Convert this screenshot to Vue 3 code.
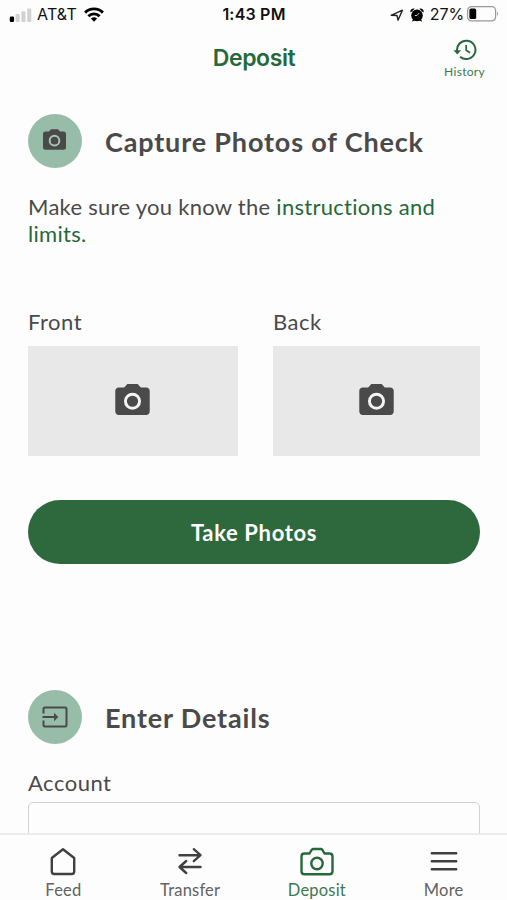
<!-- src/App.vue -->
<script setup>
import { ref } from 'vue'

const tabs = [
  { key: 'feed', label: 'Feed' },
  { key: 'transfer', label: 'Transfer' },
  { key: 'deposit', label: 'Deposit' },
  { key: 'more', label: 'More' }
]
const sides = [
  { key: 'front', label: 'Front' },
  { key: 'back', label: 'Back' }
]

const active = ref('deposit')
</script>

<template>
  <div class="screen">
    <div class="status">
      <div class="status__left">
        <svg class="signal" viewBox="0 0 24 16">
          <rect x="0" y="10" width="4.6" height="6" rx="1.4" fill="#000" />
          <rect x="6.2" y="7.5" width="4.4" height="8.5" rx="1.2" fill="#d2d2d2" />
          <rect x="12.4" y="4.5" width="4.4" height="11.5" rx="1.2" fill="#d2d2d2" />
          <rect x="18.6" y="1.5" width="4.4" height="14.5" rx="1.2" fill="#d2d2d2" />
        </svg>
        <span class="carrier">AT&amp;T</span>
        <svg class="wifi" viewBox="0 0 20 15" fill="none" stroke="#000" stroke-width="2.9">
          <path d="M1.1 5.6a12.6 12.6 0 0 1 17.8 0" />
          <path d="M4.4 9.2a8 8 0 0 1 11.2 0" />
          <path d="M10 14.8l-3.1-3.2a4.5 4.5 0 0 1 6.2 0z" fill="#000" stroke="none" />
        </svg>
      </div>
      <div class="clock">1:43 PM</div>
      <div class="status__right">
        <svg class="locate" viewBox="0 0 14 14" fill="none" stroke="#222" stroke-width="1.4" stroke-linejoin="round">
          <path d="M1.2 7.3L12.4 2.2 8 12.2 7 7.5z" />
        </svg>
        <svg class="alarm" viewBox="0 0 14 14">
          <circle cx="7" cy="7.4" r="5.8" />
          <path d="M.6 4.6A3 3 0 0 1 4.8.8zM13.4 4.6A3 3 0 0 0 9.2.8zM1.8 13.8l1.4-3 2 1.4zM12.2 13.8l-1.4-3-2 1.4z" />
          <path d="M9.2 5L7 7.500H4.800" fill="none" stroke="#ddd" stroke-width=".9" />
        </svg>
        <span class="percent">27%</span>
        <svg class="battery" viewBox="0 0 32 16">
          <rect x=".6" y=".6" width="28" height="14.300" rx="4" fill="none" stroke="#999" stroke-width="1.200" />
          <rect x="2.400" y="2.600" width="6.800" height="10.400" rx="1.600" />
          <path d="M30.200 5.300q2 2.400 0 4.800z" fill="#999" />
        </svg>
      </div>
    </div>

    <header class="header">
      <h1 class="header__title">Deposit</h1>
      <a class="history">
        <svg viewBox="0 0 24 22" fill="none" stroke="#25693a" stroke-width="2">
          <path d="M4.200 12.500A9.200 9.200 0 1 1 7.100 17.700" />
          <path d="M.5 11.300h7.600l-3.800 4.200z" fill="#25693a" stroke="none" />
          <path d="M13.200 6v5.200l3.900 2.500" stroke-width="1.700" />
        </svg>
        <span>History</span>
      </a>
    </header>

    <main class="content">
      <div class="section">
        <div class="badge">
          <svg class="badge__camera" viewBox="2 2 20 18">
            <path d="M9 2L7.170 4H4c-1.100 0-2 .9-2 2v12c0 1.100.9 2 2 2h16c1.100 0 2-.9 2-2V6c0-1.100-.9-2-2-2h-3.170L15 2z" fill="#4a4a4a" />
            <circle cx="12" cy="12" r="4.200" fill="#4a4a4a" stroke="#a5c9b7" stroke-width="1.700" />
          </svg>
        </div>
        <h2>Capture Photos of Check</h2>
      </div>

      <p class="intro">Make sure you know the <a>instructions and<br>limits.</a></p>

      <div class="photos">
        <div v-for="s in sides" :key="s.key" class="photo">
          <div class="label">{{ s.label }}</div>
          <div class="photo__box">
            <svg viewBox="2 2 20 18">
              <path d="M9 2L7.170 4H4c-1.100 0-2 .9-2 2v12c0 1.100.9 2 2 2h16c1.100 0 2-.9 2-2V6c0-1.100-.9-2-2-2h-3.170L15 2z" fill="#4a4a4a" />
              <circle cx="12" cy="12" r="4.100" fill="#4a4a4a" stroke="#f4f4f4" stroke-width="1.700" />
            </svg>
          </div>
        </div>
      </div>

      <button class="take">Take Photos</button>

      <div class="section">
        <div class="badge">
          <svg class="badge__enter" viewBox="0 0 26 22" fill="none" stroke="#4a4a4a" stroke-width="2">
            <path d="M1.500 7.500V3q0-1.500 1.500-1.500h20q1.500 0 1.500 1.500v16q0 1.500-1.500 1.500H3q-1.500 0-1.500-1.500v-4.500" />
            <path d="M.5 11h13" />
            <path d="M12 6.800l4.300 4.200-4.300 4.200z" fill="#4a4a4a" stroke="none" />
          </svg>
        </div>
        <h2>Enter Details</h2>
      </div>

      <div class="label account">Account</div>
      <div class="input"></div>
    </main>

    <nav class="tabs">
      <a v-for="t in tabs" :key="t.key" :class="['tab', t.key, { active: active===t.key }]" @click="active=t.key">
        <svg v-if="t.key==='feed'" viewBox="0 0 36 32">
          <path d="M18 4.300L29.200 13v13.500q0 2.500-2.500 2.500H9.300q-2.500 0-2.500-2.500V13z" />
        </svg>
        <svg v-else-if="t.key==='transfer'" viewBox="0 0 36 32">
          <path d="M7.500 10.200h20M21.800 4.200l6.700 6-6.700 6M28.500 22h-20M14.200 16l-6.700 6 6.700 6" />
        </svg>
        <svg v-else-if="t.key==='deposit'" viewBox="0 0 36 32">
          <path d="M5.500 8.500h5l2.300-3.800q.6-.7 1.500-.7h7.400q.9 0 1.500.7l2.300 3.800h5q3 0 3 3v14.700q0 3-3 3h-25q-3 0-3-3V11.500q0-3 3-3z" />
          <circle cx="18" cy="18.500" r="5.700" />
        </svg>
        <svg v-else viewBox="0 0 36 32">
          <path d="M5.800 8.300h24.400M5.800 16.300h24.400M5.800 24.300h24.400" />
        </svg>
        <span>{{ t.label }}</span>
      </a>
    </nav>
  </div>
</template>

<style>
body { margin: 0; background: #fdfdfd; }
</style>

<style scoped>
.screen {
  box-sizing: border-box; width: 507px; height: 900px; overflow: hidden;
  display: flex; flex-direction: column;
  background: #fdfdfd; color: #4a4a4a;
  font-family: Lato, "Noto Sans", sans-serif;
}
svg { display: block; flex: none; }

.status {
  height: 29px; padding: 0 8px 0 9px; box-sizing: border-box; flex: none;
  display: grid; grid-template-columns: 1fr auto 1fr; align-items: center;
  font-family: Inter, sans-serif; font-size: 16px; line-height: 29px; color: #111;
}
.status__left, .status__right { display: flex; align-items: center; }
.status__right { justify-content: flex-end; }
.signal { width: 24px; height: 15px; margin-top: -1px; }
.carrier { margin-left: 4px; letter-spacing: .2px; }
.wifi { width: 20px; height: 15px; margin-left: 7px; }
.clock { font-weight: 600; letter-spacing: .2px; }
.locate { width: 14px; height: 14px; }
.alarm { width: 14px; height: 14px; margin-left: 6px; }
.percent { margin-left: 6px; letter-spacing: -.1px; }
.battery { width: 32px; height: 16px; margin: -1px 0 0 3px; }

.header {
  height: 57px; flex: none; padding: 0 22px; box-sizing: border-box;
  display: grid; grid-template-columns: 1fr auto 1fr; align-items: start;
}
.header__title {
  grid-column: 2; margin: 14px 0 0 1px; color: #25693a;
  font: 600 23px/30px Inter, sans-serif; letter-spacing: -.4px;
}
.history {
  justify-self: end; display: flex; flex-direction: column; align-items: center;
  margin-top: 10px; color: #3d7950; font-size: 12px; line-height: 16px; letter-spacing: .3px;
}
.history svg { width: 24px; height: 22px; margin-bottom: 3px; }

.content { flex: 1; min-height: 0; overflow: hidden; padding: 28px 27px 0 28px; }
.section { display: flex; align-items: center; gap: 23px; height: 54px; }
.badge {
  width: 54px; height: 54px; border-radius: 50%; background: #97bda9;
  display: flex; align-items: center; justify-content: center; flex: none;
}
.badge__camera { width: 23px; height: 21px; margin: -3px 2px 0 0; }
.badge__enter { width: 26px; height: 22px; margin: -1px 1px 0 0; }
h2 { margin: 1px 0 0; font-size: 27px; line-height: 34px; font-weight: 700; letter-spacing: .84px; white-space: nowrap; }

.intro { margin: 25px 0 0; font-size: 22px; line-height: 27px; letter-spacing: .28px; white-space: nowrap; }
.intro a { color: #25693a; }

.photos { display: flex; justify-content: space-between; margin-top: 60px; }
.photo { width: 210px; }
.photo:last-child { width: 207px; }
.label { font-size: 22px; line-height: 30px; letter-spacing: .5px; }
.photo__box {
  height: 110px; margin-top: 9px; background: #e8e8e8;
  display: flex; align-items: center; justify-content: center;
}
.photo__box svg { width: 35px; height: 31px; margin: -4px 1px 0 0; }

.take {
  display: block; width: 100%; height: 64px; margin: 44px 0 126px; padding: 0;
  border: 0; border-radius: 32px; background: #2d693d; color: #fff;
  font: 700 22px/65px Lato, sans-serif; letter-spacing: .65px;
}
.account { margin-top: 24px; }
.input { height: 64px; margin-top: 4px; border: 1.500px solid #d0d2d2; border-radius: 5px; }

.tabs {
  height: 67px; box-sizing: border-box; flex: none; border-top: 2px solid #ececec;
  display: grid; grid-template-columns: repeat(4, 1fr); background: #fdfdfd;
}
.tab {
  display: flex; flex-direction: column; align-items: center; padding-top: 10px;
  font-size: 16.500px; line-height: 21px; letter-spacing: .2px; color: #626262;
}
.tab svg {
  width: 36px; height: 32px; margin-bottom: 3px;
  fill: none; stroke: #404040; stroke-width: 2.400; stroke-linecap: round; stroke-linejoin: round;
}
.tab.active { color: #3d7950; }
.tab.active svg { stroke: #25693a; }
</style>
